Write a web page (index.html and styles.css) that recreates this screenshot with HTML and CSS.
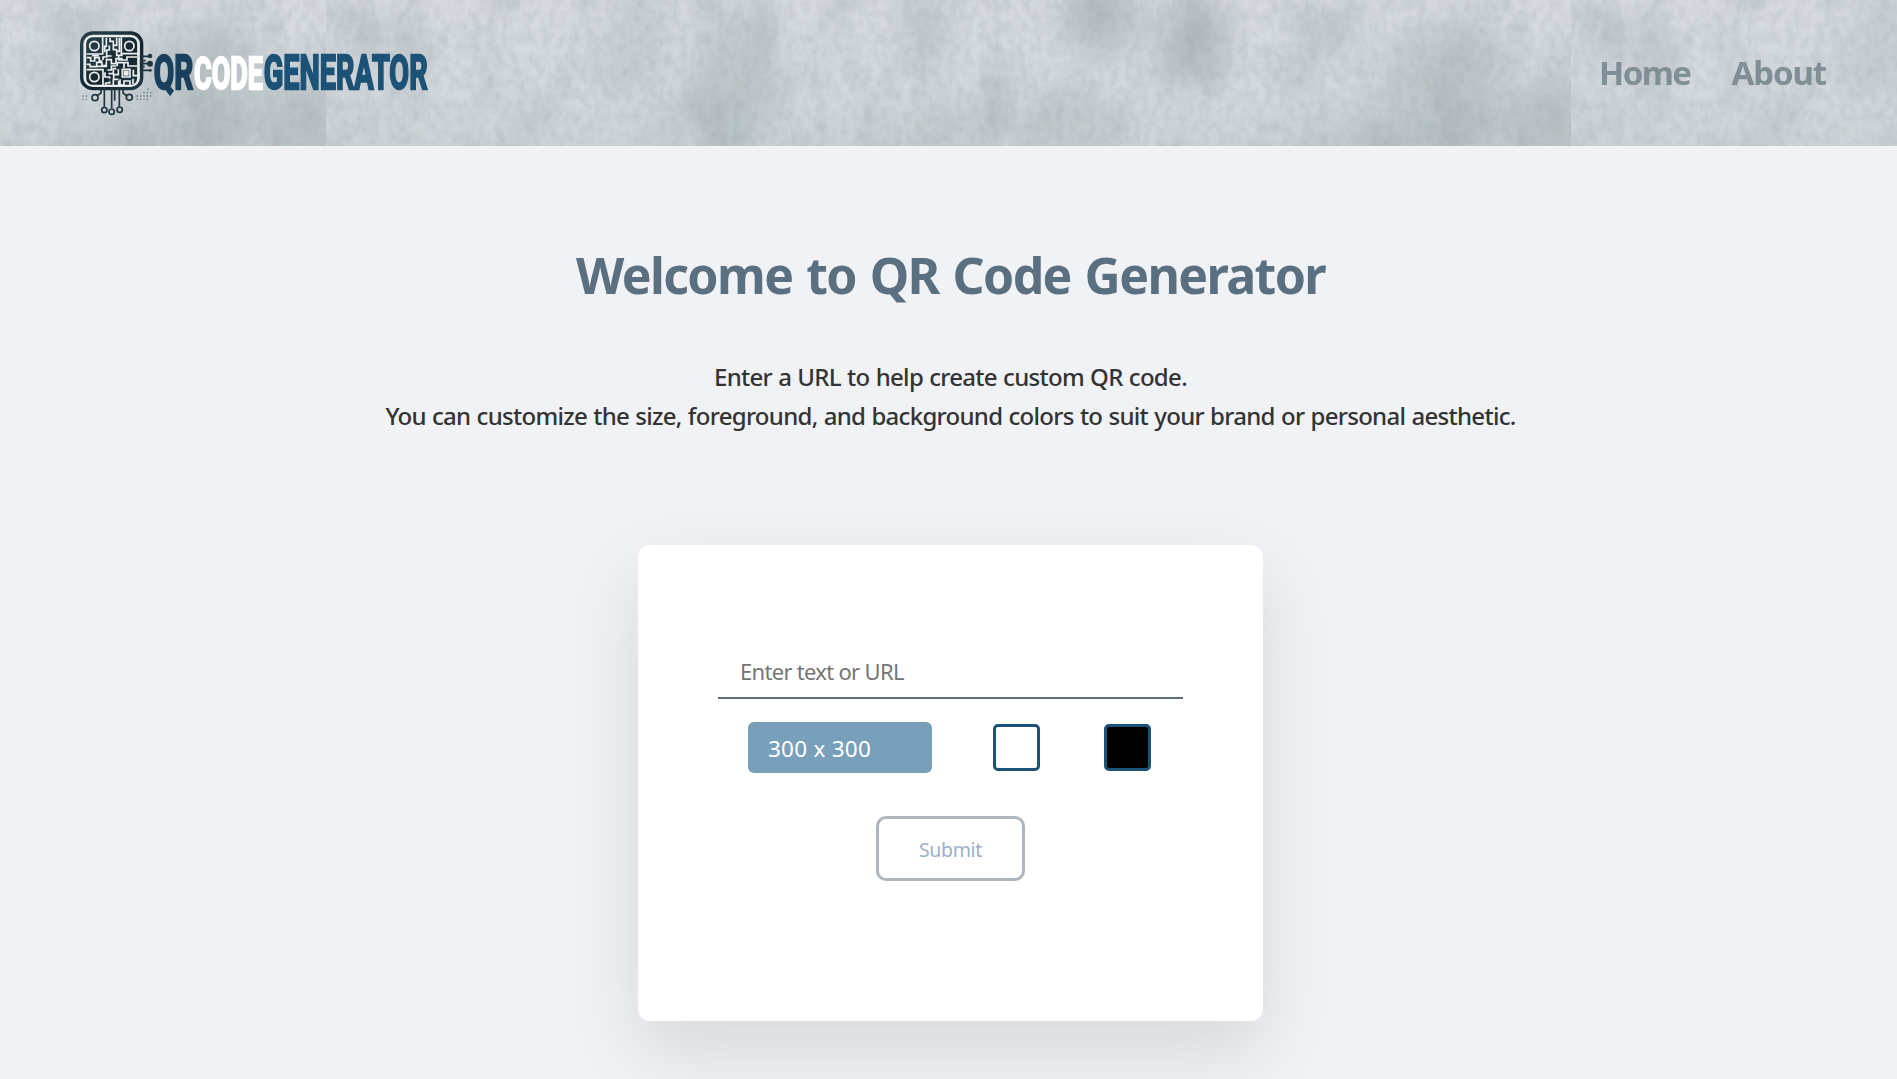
FILE: index.html
```html
<!DOCTYPE html>
<html lang="en">
<head>
<meta charset="utf-8">
<title>QR Code Generator</title>
<link rel="stylesheet" href="styles.css">
</head>
<body>
<header class="header">
  <svg class="texture" width="1901" height="146" aria-hidden="true">
    <defs>
      <filter id="stain" x="0" y="0" width="1245" height="146" filterUnits="userSpaceOnUse" color-interpolation-filters="sRGB">
        <feTurbulence type="fractalNoise" baseFrequency="0.02 0.011" numOctaves="6" seed="8"/>
        <feColorMatrix values="0 0 0 0 .60  0 0 0 0 .63  0 0 0 0 .65  1.9 0 0 0 -.82"/>
      </filter>
      <filter id="grain" x="0" y="0" width="1245" height="146" filterUnits="userSpaceOnUse" color-interpolation-filters="sRGB">
        <feTurbulence type="fractalNoise" baseFrequency="0.13 0.09" numOctaves="4" seed="3"/>
        <feColorMatrix values="0 0 0 0 .6  0 0 0 0 .63  0 0 0 0 .65  .9 0 0 0 -.33"/>
      </filter>
      <filter id="soft" x="-50%" y="-50%" width="200%" height="200%"><feGaussianBlur stdDeviation="15"/></filter>
      <linearGradient id="wash" x1="0" y1="0" x2="0" y2="1"><stop offset="0" stop-color="#d5dadf"/><stop offset=".6" stop-color="#d3d9dd"/><stop offset="1" stop-color="#cbd4d7"/></linearGradient>
      <clipPath id="edge"><rect width="1245" height="146"/></clipPath>
      <g id="tile" clip-path="url(#edge)">
        <rect width="1245" height="146" fill="url(#wash)"/>
        <g filter="url(#soft)" fill="#9fa8ac">
          <ellipse cx="315" cy="40" rx="22" ry="60" opacity=".3"/>
          <ellipse cx="410" cy="80" rx="42" ry="75" opacity=".36"/>
          <ellipse cx="600" cy="30" rx="20" ry="45" opacity=".36"/>
          <ellipse cx="620" cy="125" rx="35" ry="25" opacity=".25"/>
          <ellipse cx="740" cy="125" rx="55" ry="35" opacity=".25"/>
          <ellipse cx="775" cy="18" rx="42" ry="38" opacity=".45"/>
          <ellipse cx="860" cy="38" rx="28" ry="45" opacity=".5"/>
          <ellipse cx="1120" cy="85" rx="65" ry="60" opacity=".36"/>
          <ellipse cx="1225" cy="130" rx="55" ry="40" opacity=".4"/>
          <ellipse cx="1060" cy="146" rx="80" ry="25" opacity=".25"/>
        </g>
        <rect width="1245" height="146" filter="url(#stain)" opacity=".42"/>
        <rect width="1245" height="146" filter="url(#grain)" opacity=".5"/>
      </g>
    </defs>
    <use href="#tile" x="-919"/><use href="#tile" x="326"/><use href="#tile" x="1571"/>
  </svg>
  <svg class="logo" width="400" height="115" viewBox="0 0 1200 345" role="img" aria-label="QR Code Generator">
    <defs><linearGradient id="ink" x1="0" y1="0" x2="1" y2="1"><stop offset="0" stop-color="#29414d"/><stop offset=".6" stop-color="#14262f"/><stop offset="1" stop-color="#213843"/></linearGradient></defs>
    <rect x="65" y="51" width="180" height="167" rx="33" fill="#d8dfe2" stroke="url(#ink)" stroke-width="10"/>
    <rect x="76" y="61" width="158" height="148" rx="22" fill="url(#ink)" stroke="#eef1f1" stroke-width="5"/>
    <g fill="none" stroke="#eef1f1" stroke-width="5">
      <circle cx="103" cy="90" r="14"/><circle cx="208" cy="90" r="14"/><circle cx="103" cy="183" r="14"/>
      <path d="M128 64v50H80M184 64v49h49M80 161h49v46M139 66v25h-5v18M150 66v10h10v10M170 65v23h-10v13h12M178 66v40h-8v12h18M148 88v14h-8v18h15"/>
      <path d="M80 125h12v10h12v-10h14v10h11v-12h14M80 145h10v7h20v-13h16v10h15M96 119h20M112 151h27v-20h15v12h14v-15h20M176 119v13h25v-9h30M142 162h12v-12h18v-10h20v16M135 169v14h14v18h-12v8M145 173h15v-15h15v18h-14v14h14M184 140h20v10h27M176 194v15M160 190v18M187 160h23v23h-23zM220 161v18h13M180 190v17h12v-12h18v12M219 188v16"/>
    </g>
    <g fill="#1a2e38"><rect x="156" y="115" width="9" height="9"/><rect x="127" y="132" width="10" height="7"/><rect x="169" y="150" width="9" height="10"/><rect x="147" y="188" width="9" height="8"/></g>
    <rect x="191" y="164" width="15" height="15" fill="#eef1f1"/>
    <g fill="none" stroke="#20353f" stroke-width="5">
      <path d="M133 214v58M155 214v62M164 214v40M178 214v58M123 217v14l-11 8M189 217v14l10 8"/>
      <circle cx="105" cy="245" r="9"/><circle cx="208" cy="244" r="9"/><circle cx="133" cy="282" r="8"/><circle cx="155" cy="287" r="8"/><circle cx="179" cy="281" r="8"/>
      <path d="M239 121h26M239 134h18M239 143h25M239 152h15M239 163h34"/>
    </g>
    <g fill="#20353f"><circle cx="270" cy="120" r="7"/><circle cx="270" cy="143" r="9"/><circle cx="271" cy="163" r="4"/></g>
    <path d="M67 240h19M67 250h19M230 240h48M230 250h38M250 230h28M262 219h4" stroke="#667984" stroke-width="4" stroke-dasharray="4 6"/>
    <g class="wordmark">
      <text transform="translate(281 219) scale(.615 1)" font-size="147" textLength="193" lengthAdjust="spacingAndGlyphs" fill="#1a405d" stroke="#1a405d">QR</text>
      <text transform="translate(402 218) scale(.613 1)" font-size="132" textLength="337" lengthAdjust="spacingAndGlyphs" fill="#fff" stroke="#fff">CODE</text>
      <text transform="translate(611 219) scale(.594 1)" font-size="144" textLength="828" lengthAdjust="spacingAndGlyphs" fill="#1d5277" stroke="#1d5277">GENERATOR</text>
    </g>
  </svg>
  <nav class="nav"><a class="nav-home">Home</a><a class="nav-about">About</a></nav>
</header>
<main class="main">
  <h1 class="title">Welcome to QR Code Generator</h1>
  <p class="intro">Enter a URL to help create custom QR code.<br>You can customize the size, foreground, and background colors to suit your brand or personal aesthetic.</p>
  <form class="card">
    <input class="url" type="text" placeholder="Enter text or URL">
    <div class="options">
      <div class="size">300 x 300</div>
      <span class="swatch swatch-light"></span>
      <span class="swatch swatch-dark"></span>
    </div>
    <button class="submit" type="button">Submit</button>
  </form>
</main>
</body>
</html>
```
FILE: styles.css
```css
* { box-sizing: border-box; }
html { overflow: hidden; background: #f0f2f6; }
body { width: 1901px; height: 1079px; margin: 0; overflow: hidden; background: #f0f2f6; font-family: "Noto Sans", "Open Sans", sans-serif; }
.header { position: relative; display: flex; align-items: center; justify-content: space-between; height: 146px; padding: 0 75px 0 60px; overflow: hidden; }
.texture { position: absolute; inset: 0; }
.logo { position: relative; display: block; }
.wordmark { font-family: Roboto, sans-serif; font-weight: 700; stroke-width: 7px; }
.nav { position: relative; display: flex; gap: 41px; color: #808e96; font-size: 33px; font-weight: 700; line-height: 46px; letter-spacing: -1.1px; }
.nav-home { letter-spacing: -1.6px; }
.main { display: flex; flex-direction: column; align-items: center; }
.title { margin: 94px 0 0; color: #5a7080; font-size: 50px; font-weight: 700; line-height: 70px; letter-spacing: -1.62px; word-spacing: 2.4px; white-space: nowrap; }
.intro { margin: 47px 0 0; color: #333; font-size: 24px; font-weight: 500; line-height: 39px; letter-spacing: -.7px; word-spacing: .6px; text-align: center; white-space: nowrap; }
.card { display: flex; flex-direction: column; align-items: center; width: 625px; height: 476px; margin-top: 110px; padding-top: 101px; border-radius: 12px; background: #fff; box-shadow: 0 30px 75px rgba(0, 0, 0, .11); }
.url { width: 465px; height: 53px; padding: 0 22px 2px; border: 0; border-bottom: 2px solid #5a7080; background: transparent; font: 400 22px "Noto Sans", sans-serif; letter-spacing: -.7px; outline: 0; }
.url::placeholder { color: #757575; }
.options { display: flex; align-items: center; height: 51px; width: 405px; margin-top: 23px; }
.size { width: 184px; height: 51px; padding-left: 20px; border-radius: 6px; background: #79a0bb; color: #fff; font-size: 22.5px; line-height: 53px; letter-spacing: .25px; }
.swatch { width: 47px; height: 47px; border: 3px solid #1d5277; border-radius: 5px; }
.swatch-light { margin-left: 61px; background: #fff; }
.swatch-dark { margin-left: 64px; background: #000; }
.submit { width: 149px; height: 65px; margin-top: 43px; padding: 1px 0 0; border: 3px solid #aeb6bd; border-radius: 10px; background: transparent; color: #9bb0c7; font: 400 19.5px "Noto Sans", sans-serif; letter-spacing: -.35px; }
```
